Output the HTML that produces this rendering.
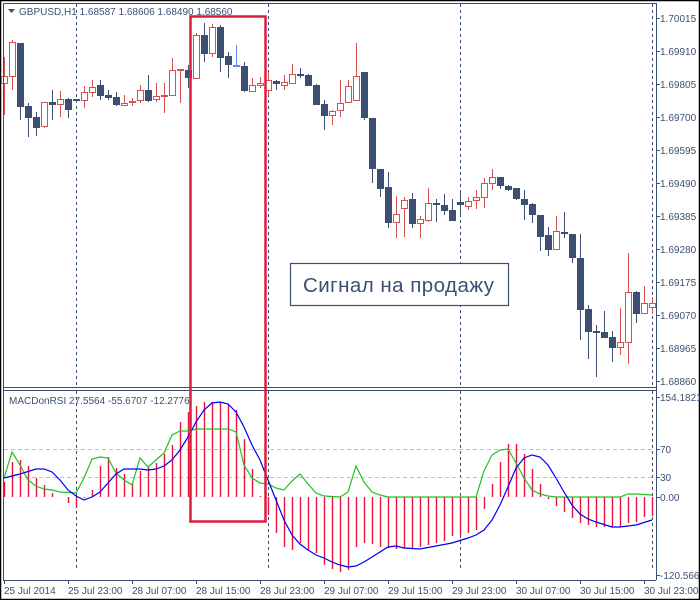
<!DOCTYPE html>
<html><head><meta charset="utf-8"><style>
html,body{margin:0;padding:0;background:#fff;width:700px;height:600px;overflow:hidden}
svg{display:block}
text{font-family:"Liberation Sans",sans-serif;font-size:10px;fill:#3c4f73}
</style></head><body>
<svg id="s" width="700" height="600" xmlns="http://www.w3.org/2000/svg">
<rect x="0.5" y="0.5" width="699" height="599" fill="#fff" stroke="#000" stroke-width="1.5"/>
<g id="grid"></g>
<g id="cand"></g>
<g id="ind"></g>
<g id="fr" fill="none" stroke="#3c4f73" stroke-width="1">
<line x1="3.5" y1="3" x2="3.5" y2="580"/>
<line x1="3" y1="3.5" x2="656" y2="3.5"/>
<line x1="656.5" y1="3" x2="656.5" y2="580"/>
<line x1="3" y1="387.5" x2="656" y2="387.5"/>
<line x1="3" y1="390.5" x2="656" y2="390.5"/>
<line x1="3" y1="580.5" x2="656" y2="580.5"/>
</g>
<g id="lab"></g>
<path d="M8 9 L15 9 L11.5 13 Z" fill="#3c4f73"/>
<text x="19" y="15">GBPUSD,H1  1.68587 1.68606 1.68490 1.68560</text>
<text x="9" y="404">MACDonRSI 27.5564 -55.6707 -12.2776</text>
<rect x="190.5" y="16.5" width="75" height="505" fill="none" stroke="#dc1c3c" stroke-width="2.5"/>
<rect x="290.5" y="263.5" width="218" height="42" fill="#fff" stroke="#3c4f73" stroke-width="1.2"/>
<text x="303" y="292" style="font-size:20.5px" textLength="191">Сигнал на продажу</text>
</svg>
<script>
var NS="http://www.w3.org/2000/svg";
function el(p,t,a){var e=document.createElementNS(NS,t);for(var k in a)e.setAttribute(k,a[k]);document.getElementById(p).appendChild(e);return e;}
var C=[[4,'r',76,83,57,115],[12,'r',42,76,40,90],[20,'b',43,107,43,120],[28,'b',106,118,103,137],[36,'b',117,128,112,136],[44,'r',102,126,102,128],[52,'b',102,105,90,120],[60,'r',99,104,91,117],[68,'b',99,110,98,118],[76,'b',99,101,99,101],[84,'r',92,100,86,108],[92,'r',87,92,80,97],[100,'b',85,96,80,100],[108,'b',95,98,90,100],[116,'b',97,105,92,106],[124,'r',103,105,95,106],[132,'r',101,102,98,106],[140,'r',90,100,85,103],[148,'b',90,101,75,102],[156,'r',96,99,83,102],[164,'r',95,96,83,113],[172,'r',70,95,58,96],[180,'r',69,70,69,103],[188,'b',70,78,65,88],[196,'r',35,78,33,78],[204,'b',35,54,23,62],[212,'r',27,53,24,57],[220,'b',27,58,25,72],[228,'b',56,65,52,78],[236,'l',65,66,45,67],[244,'b',66,91,62,92],[252,'r',85,91,78,92],[260,'r',83,85,77,88],[268,'r',80,90,72,96],[276,'b',81,84,80,90],[284,'r',82,85,75,90],[292,'r',74,83,64,83],[300,'b',74,75,68,78],[308,'b',75,86,74,86],[316,'b',85,105,84,105],[324,'b',104,116,100,130],[332,'r',111,115,110,125],[340,'r',103,110,80,117],[348,'r',86,102,80,103],[356,'r',76,100,43,100],[364,'b',72,118,72,120],[372,'b',118,169,118,183],[380,'b',169,189,169,197],[388,'b',187,223,172,228],[396,'r',214,222,196,238],[404,'r',200,208,197,237],[412,'b',199,224,193,228],[420,'r',219,223,216,238],[428,'r',203,220,188,222],[436,'b',203,205,199,222],[444,'b',205,211,194,215],[452,'b',210,221,199,221],[460,'b',202,205,193,216],[468,'r',201,206,197,210],[476,'r',197,200,190,209],[484,'r',183,197,178,208],[492,'r',177,183,169,190],[500,'b',177,186,177,189],[508,'b',186,190,185,191],[516,'b',188,199,188,200],[524,'b',199,205,190,220],[532,'b',204,215,203,223],[540,'b',215,237,215,251],[548,'b',235,250,227,256],[556,'r',231,249,216,249],[564,'b',232,234,212,238],[572,'b',234,258,234,263],[580,'b',258,310,234,340],[588,'b',309,332,305,359],[596,'b',331,333,325,377],[604,'b',332,338,311,338],[612,'b',337,348,331,362],[620,'r',342,347,308,355],[628,'r',292,342,253,364],[636,'b',292,314,291,323],[644,'r',303,313,286,313],[652,'r',303,307,297,314]];
C.forEach(function(c){var x=c[0],col=c[1]=='r'?'#d75050':(c[1]=='l'?'#5b8be0':'#3c4f73');
el('cand','line',{x1:x+0.5,y1:c[4],x2:x+0.5,y2:c[5],stroke:col,'stroke-width':1});
var h=Math.max(1,c[3]-c[2]);
if(c[1]=='r')el('cand','rect',{x:x-2.5,y:c[2]+0.5,width:6,height:h,fill:'#fff',stroke:col,'stroke-width':1});
else el('cand','rect',{x:x-3,y:c[2],width:7,height:h+(h<2?1:0),fill:col});});
[76,268,460,652].forEach(function(x){el('grid','line',{x1:x+0.5,y1:4,x2:x+0.5,y2:387,stroke:'#3c4f73','stroke-dasharray':'3,3'});el('grid','line',{x1:x+0.5,y1:391,x2:x+0.5,y2:568,stroke:'#3c4f73','stroke-dasharray':'3,3'});});
[449,477].forEach(function(y){el('grid','line',{x1:4,y1:y+0.5,x2:655,y2:y+0.5,stroke:'#c0c0c0','stroke-dasharray':'4,3'});});
var H=[482,462,460,466,478,485,493,497,503,508,498,490,466,457,468,474,483,471,467,463,454,445,422,412,406,402,402,402,405,410,439,469,496,515,533,547,550,543,550,553,565,569,572,570,547,543,544,547,548,549,548,548,547,545,543,541,536,535,533,530,509,484,462,444,444,454,469,484,499,506,512,518,523,525,527,527,527,527,523,522,517,516];
H.forEach(function(y,i){var x=4+8*i;if(Math.abs(y-497)<1)return;el('ind','line',{x1:x+0.5,y1:497,x2:x+0.5,y2:y,stroke:'#e8153a','stroke-width':1.4});});
var B=[[4,478],[20,474],[36,469],[44,469],[52,472],[60,480],[68,490],[76,496],[84,500],[92,497],[100,492],[108,483],[116,474],[124,469],[140,469],[148,470],[156,469],[164,466],[172,460],[180,450],[188,437],[196,422],[204,410],[212,403],[220,402],[228,404],[236,412],[244,427],[252,445],[260,460],[268,480],[276,500],[284,520],[292,535],[300,544],[308,550],[316,555],[324,558],[332,562],[340,565],[348,567],[356,566],[364,562],[372,557],[380,552],[388,547],[396,546],[404,548],[420,549],[436,546],[452,543],[468,538],[476,535],[484,530],[492,520],[500,505],[508,487],[516,468],[524,458],[532,455],[540,457],[548,465],[556,478],[564,492],[572,505],[580,514],[588,519],[596,522],[612,527],[620,527],[636,525],[652,520]];
var G=[[4,478],[12,452],[20,465],[28,480],[36,486],[44,489],[52,490],[60,492],[76,493],[84,478],[92,459],[100,457],[108,458],[116,473],[124,480],[132,485],[140,458],[148,467],[156,460],[164,453],[172,435],[180,431],[188,431],[196,429],[228,429],[236,432],[244,465],[252,478],[260,483],[268,484],[276,488],[284,490],[292,481],[300,474],[308,484],[316,493],[324,496],[340,497],[348,492],[356,466],[364,482],[372,492],[380,495],[388,497],[476,497],[484,471],[492,455],[500,450],[508,449],[516,463],[524,478],[532,490],[540,494],[548,496],[556,497],[620,497],[628,494],[636,494],[652,495]];
function pl(P,c){el('ind','polyline',{points:P.map(function(p){return p.join(',')}).join(' '),fill:'none',stroke:c,'stroke-width':1.2});}
pl(G,'#22c022');pl(B,'#0000ee');
var pr=['1.70015','1.69910','1.69805','1.69700','1.69595','1.69490','1.69385','1.69280','1.69175','1.69070','1.68965','1.68860'];
pr.forEach(function(t,i){var y=18+33*i;el('lab','line',{x1:656,y1:y+0.5,x2:660,y2:y+0.5,stroke:'#3c4f73'});var e=el('lab','text',{x:660,y:y+4});e.textContent=t;});
[['154.1821',397],['70',449],['30',477],['0.00',497],['-120.5666',575]].forEach(function(a){el('lab','line',{x1:656,y1:a[1]+0.5,x2:660,y2:a[1]+0.5,stroke:'#3c4f73'});var e=el('lab','text',{x:660,y:a[1]+4});e.textContent=a[0];});
var bl=['25 Jul 2014','25 Jul 23:00','28 Jul 07:00','28 Jul 15:00','28 Jul 23:00','29 Jul 07:00','29 Jul 15:00','29 Jul 23:00','30 Jul 07:00','30 Jul 15:00','30 Jul 23:00'];
bl.forEach(function(t,i){var x=4+64*i;el('lab','line',{x1:x+0.5,y1:580,x2:x+0.5,y2:584,stroke:'#3c4f73'});var e=el('lab','text',{x:x,y:594});e.textContent=t;});
</script>
</body></html>
